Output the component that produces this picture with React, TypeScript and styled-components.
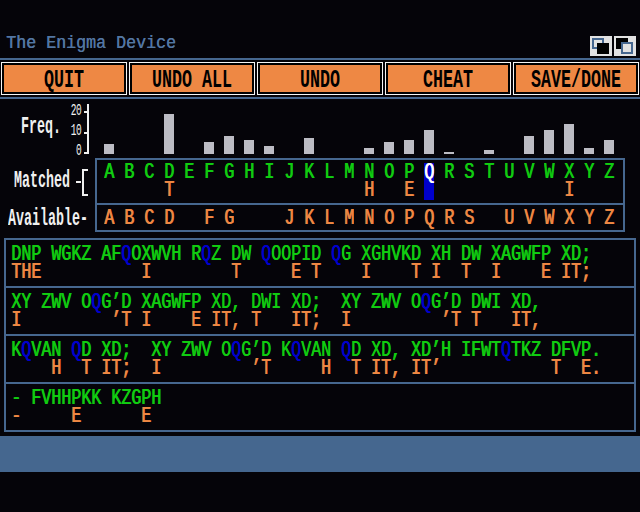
import React from 'react';
import styled, { createGlobalStyle, css } from 'styled-components';

const BLUE = '#46678f';
const ORANGE = '#ee8844';
const GREEN = '#11cc11';
const QBLUE = '#0000cc';
const BLACK = '#050409';

const GlobalStyle = createGlobalStyle`
  html, body {
    margin: 0;
    padding: 0;
    background: ${BLACK};
  }
`;

const mono = css`
  font-family: 'Liberation Mono', 'DejaVu Sans Mono', monospace;
  white-space: pre;
`;

// topaz-ish glyphs: 10px advance, stretched vertically
const Line = styled.div<{ $color?: string }>`
  ${mono};
  font-size: 16.67px;
  line-height: 18px;
  height: 18px;
  color: ${(p) => p.$color || GREEN};
  text-shadow: 0.7px 0 0 currentColor;
  transform: scaleY(1.27);
`;

const Screen = styled.div`
  width: 640px;
  height: 512px;
  padding-top: 33px;
  box-sizing: border-box;
  background: ${BLACK};
  overflow: hidden;
`;

const TitleBar = styled.div`
  display: flex;
  justify-content: space-between;
  height: 25px;
  padding: 0 4px 0 6px;
  border-bottom: 2px solid ${BLUE};
`;

const Title = styled.div`
  ${mono};
  font-size: 16.67px;
  line-height: 18px;
  margin-top: 2px;
  color: #5376a2;
  text-shadow: 0.4px 0 0 currentColor;
  transform: scaleY(1.08);
`;

const Gadgets = styled.div`
  display: flex;
  gap: 2px;
  margin-top: 3px;
`;

const Gadget = styled.svg`
  display: block;
  width: 22px;
  height: 20px;
  background: #e2e2e2;
`;

const ButtonBar = styled.div`
  display: flex;
  gap: 2px;
  padding: 2px 1px;
  border-bottom: 2px solid ${BLUE};
`;

const Button = styled.div`
  ${mono};
  width: 126px;
  height: 33px;
  box-sizing: border-box;
  display: flex;
  align-items: center;
  justify-content: center;
  padding-top: 4px;
  background: ${ORANGE};
  border: 1px solid #f4f4f4;
  box-shadow: inset 0 0 0 2px #000;
  color: #000;
  font-size: 16.67px;
  font-weight: bold;
  line-height: 18px;
  span {
    display: block;
    transform: scaleY(1.5);
  }
`;

const ChartRow = styled.div`
  display: flex;
  height: 59px;
`;

const ChartLeft = styled.div`
  display: flex;
  width: 99px;
  padding-left: 21px;
  box-sizing: border-box;
`;

const Label = styled.div`
  ${mono};
  font-size: 13.33px;
  font-weight: bold;
  line-height: 16px;
  height: 16px;
  color: #f0f0f0;
  transform: scaleY(1.85);
`;

const FreqLabel = styled(Label)`
  width: 48px;
  margin-top: 20px;
`;

const AxisNums = styled.div`
  display: flex;
  flex-direction: column;
  width: 14px;
  padding-top: 3px;
`;

const AxisNum = styled.div`
  ${mono};
  font-size: 9.5px;
  line-height: 20px;
  height: 20px;
  text-align: right;
  padding-right: 2px;
  letter-spacing: -0.6px;
  color: #f0f0f0;
  transform: scaleY(1.65);
`;

const Axis = styled.svg`
  display: block;
  width: 8px;
  height: 59px;
`;

const LetterGrid = styled.div`
  display: grid;
  grid-template-columns: repeat(26, 20px);
`;

const Bars = styled(LetterGrid)`
  align-items: end;
  padding-bottom: 4px;
`;

const Bar = styled.div`
  width: 10px;
  margin: 0 auto;
  background: #bcbcc4;
`;

const LetterSection = styled.div`
  display: flex;
  height: 74px;
`;

const LetterLabels = styled.div`
  width: 95px;
  display: flex;
  flex-direction: column;
`;

const MatchedLabel = styled.div`
  display: flex;
  align-items: center;
  height: 45px;
  padding-left: 14px;
  box-sizing: border-box;
`;

const Dash = styled.div`
  width: 5px;
  height: 2px;
  margin: 2px 1px 0 6px;
  background: #f0f0f0;
`;

const Bracket = styled.div`
  width: 4px;
  height: 23px;
  margin-top: 3px;
  border: 2px solid #f0f0f0;
  border-right: none;
`;

const AvailableLabel = styled.div`
  height: 29px;
  padding: 8px 0 0 8px;
  box-sizing: border-box;
`;

const LetterBox = styled.div`
  width: 530px;
  box-sizing: border-box;
  border: 2px solid ${BLUE};
`;

const MatchedArea = styled(LetterGrid)`
  height: 43px;
  padding-left: 2px;
  border-bottom: 2px solid ${BLUE};
`;

const AvailableArea = styled(LetterGrid)`
  height: 25px;
  padding: 5px 0 0 2px;
  box-sizing: border-box;
`;

const MatchCell = styled.div<{ $active?: boolean }>`
  width: 10px;
  height: 37px;
  margin: 3px auto 0;
  padding-top: 1px;
  box-sizing: border-box;
  background: ${(p) => (p.$active ? QBLUE : 'transparent')};
`;

const Cell = styled.div`
  width: 10px;
  margin: 0 auto;
`;

const Panels = styled.div`
  width: 632px;
  margin: 6px 0 0 4px;
  box-sizing: border-box;
  border: 2px solid ${BLUE};
`;

const Panel = styled.div`
  height: 48px;
  padding: 6px 0 0 5px;
  box-sizing: border-box;
  & + & {
    border-top: 2px solid ${BLUE};
  }
  &:first-child {
    height: 46px;
  }
`;

const QMark = styled.span`
  color: ${QBLUE};
`;

const StatusStrip = styled.div`
  height: 36px;
  margin-top: 4px;
  background: #45678f;
`;

const ALPHA = 'ABCDEFGHIJKLMNOPQRSTUVWXYZ'.split('');
const FREQ = [5, 0, 0, 20, 0, 6, 9, 7, 4, 0, 8, 0, 0, 3, 6, 7, 12, 1, 0, 2, 0, 9, 12, 15, 3, 7];
const KEY: Record<string, string> = { D: 'T', N: 'H', P: 'E', X: 'I' };
const USED = new Set(Object.values(KEY));
const SELECTED = 'Q';

const CIPHER = [
  'DNP WGKZ AFQOXWVH RQZ DW QOOPID QG XGHVKD XH DW XAGWFP XD;',
  'XY ZWV OQG’D XAGWFP XD, DWI XD;  XY ZWV OQG’D DWI XD,',
  'KQVAN QD XD;  XY ZWV OQG’D KQVAN QD XD, XD’H IFWTQTKZ DFVP.',
  '- FVHHPKK KZGPH',
];

const decode = (s: string) =>
  s
    .split('')
    .map((c) => (/[A-Z]/.test(c) ? KEY[c] || ' ' : c))
    .join('');

function CipherLine({ text }: { text: string }) {
  const parts = text.split(SELECTED);
  return (
    <Line>
      {parts.map((p, i) => (
        <React.Fragment key={i}>
          {p}
          {i < parts.length - 1 && <QMark>{SELECTED}</QMark>}
        </React.Fragment>
      ))}
    </Line>
  );
}

function TitleGadgets() {
  return (
    <Gadgets>
      <Gadget viewBox="0 0 22 20">
        <rect x="3" y="3" width="10" height="9" fill="none" stroke={BLUE} strokeWidth="2" />
        <rect x="7" y="7" width="12" height="11" fill="#000" />
      </Gadget>
      <Gadget viewBox="0 0 22 20">
        <rect x="2" y="2" width="12" height="11" fill="#000" />
        <rect x="8" y="7" width="10" height="10" fill="#e2e2e2" stroke={BLUE} strokeWidth="2" />
      </Gadget>
    </Gadgets>
  );
}

export default function App() {
  return (
    <Screen>
      <GlobalStyle />
      <TitleBar>
        <Title>The Enigma Device</Title>
        <TitleGadgets />
      </TitleBar>

      <ButtonBar>
        {['QUIT', 'UNDO ALL', 'UNDO', 'CHEAT', 'SAVE/DONE'].map((b) => (
          <Button key={b}>
            <span>{b}</span>
          </Button>
        ))}
      </ButtonBar>

      <ChartRow>
        <ChartLeft>
          <FreqLabel>Freq.</FreqLabel>
          <AxisNums>
            <AxisNum>20</AxisNum>
            <AxisNum>10</AxisNum>
            <AxisNum>0</AxisNum>
          </AxisNums>
          <Axis viewBox="0 0 8 59">
            <rect x="4" y="5" width="2" height="50" fill="#f0f0f0" />
            <rect x="1" y="12" width="4" height="2" fill="#f0f0f0" />
            <rect x="1" y="33" width="4" height="2" fill="#f0f0f0" />
            <rect x="1" y="53" width="4" height="2" fill="#f0f0f0" />
          </Axis>
        </ChartLeft>
        <Bars>
          {FREQ.map((f, i) => (
            <Bar key={ALPHA[i]} style={{ height: f * 2 }} />
          ))}
        </Bars>
      </ChartRow>

      <LetterSection>
        <LetterLabels>
          <MatchedLabel>
            <Label>Matched</Label>
            <Dash />
            <Bracket />
          </MatchedLabel>
          <AvailableLabel>
            <Label>Available-</Label>
          </AvailableLabel>
        </LetterLabels>
        <LetterBox>
          <MatchedArea>
            {ALPHA.map((c) => (
              <MatchCell key={c} $active={c === SELECTED}>
                <Line $color={c === SELECTED ? '#ffffff' : GREEN}>{c}</Line>
                <Line $color={ORANGE}>{KEY[c] || ' '}</Line>
              </MatchCell>
            ))}
          </MatchedArea>
          <AvailableArea>
            {ALPHA.map((c) => (
              <Cell key={c}>
                <Line $color={ORANGE}>{USED.has(c) ? ' ' : c}</Line>
              </Cell>
            ))}
          </AvailableArea>
        </LetterBox>
      </LetterSection>

      <Panels>
        {CIPHER.map((t) => (
          <Panel key={t}>
            <CipherLine text={t} />
            <Line $color={ORANGE}>{decode(t)}</Line>
          </Panel>
        ))}
      </Panels>

      <StatusStrip />
    </Screen>
  );
}
